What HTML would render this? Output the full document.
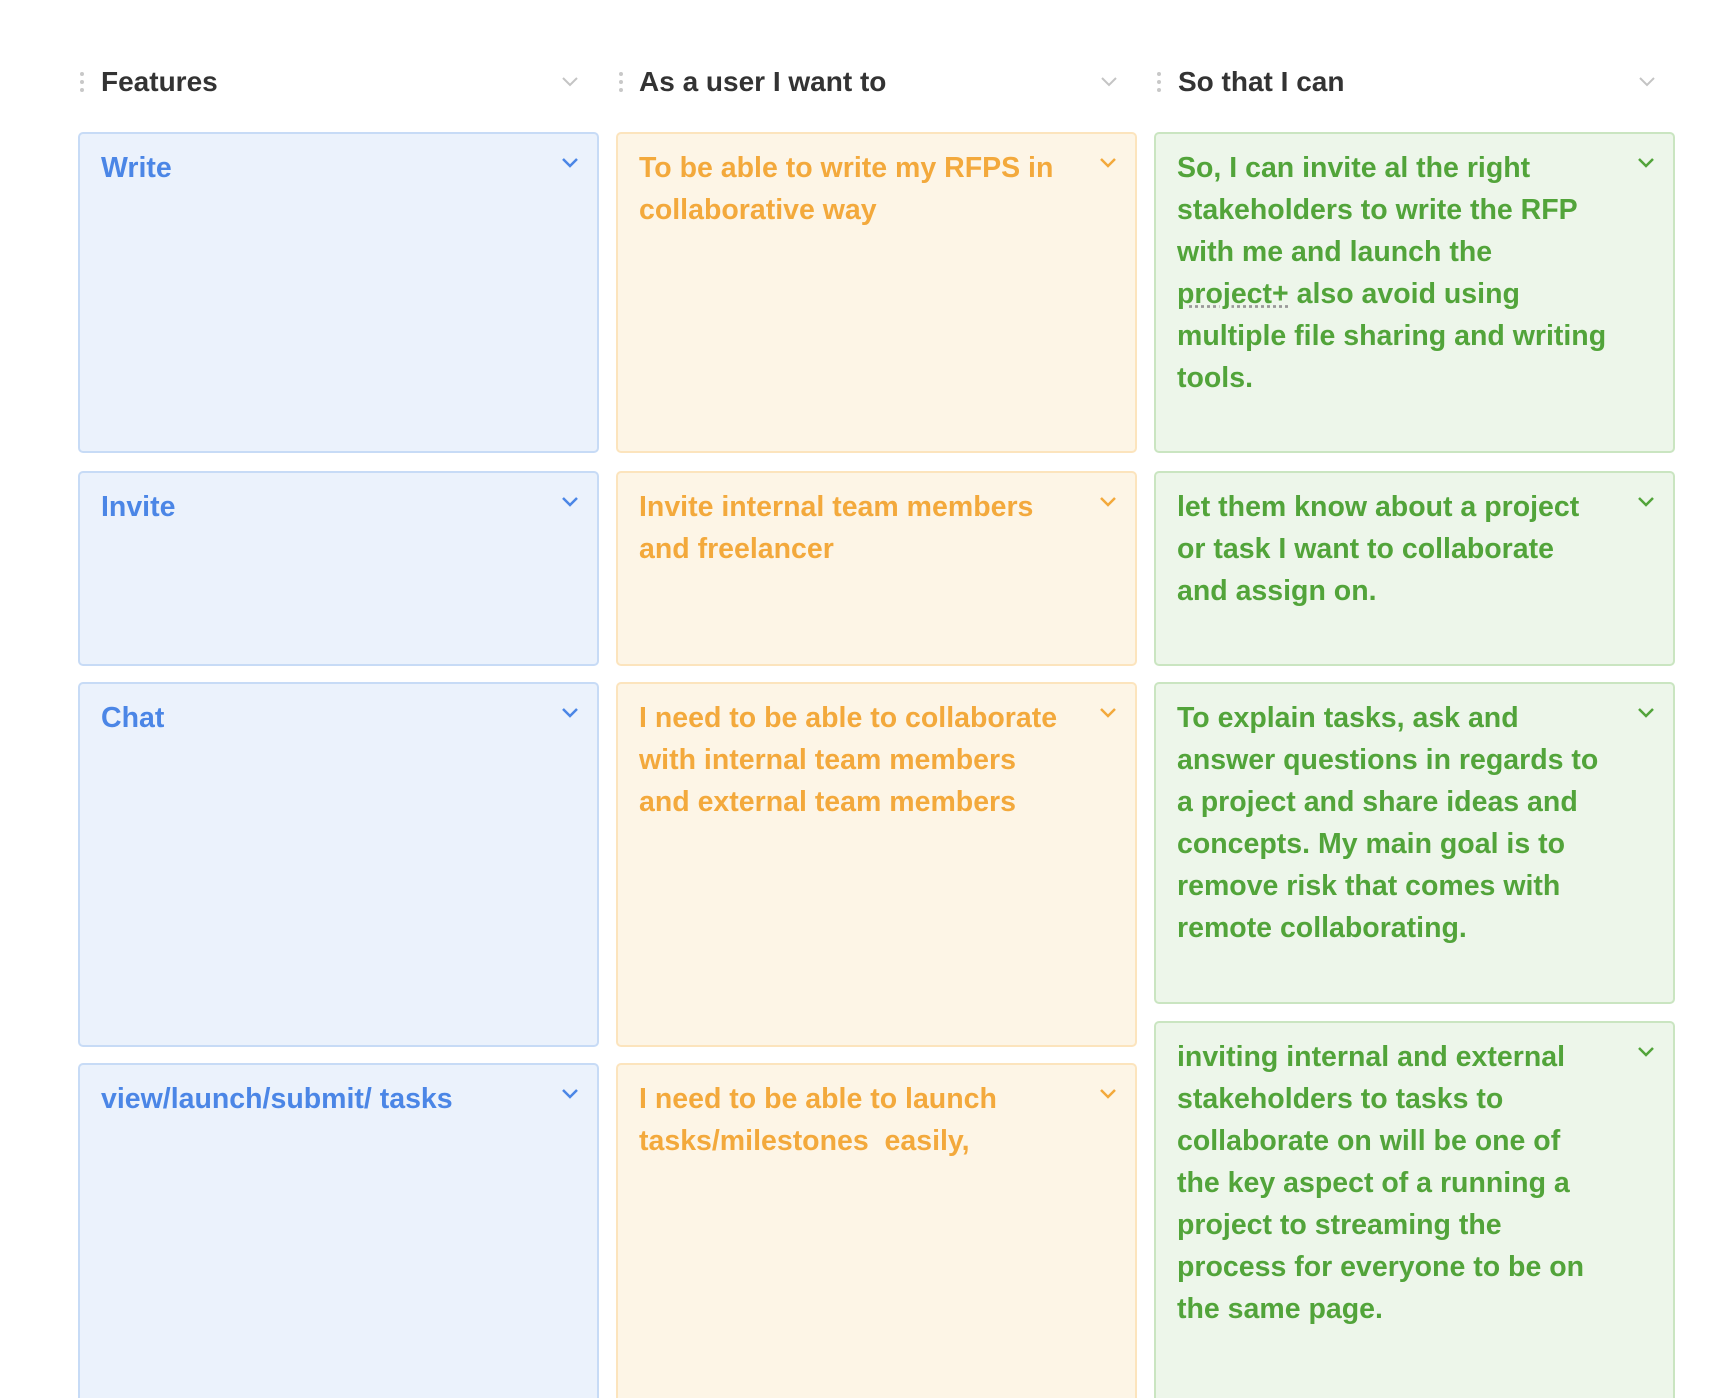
<!DOCTYPE html>
<html><head><style>
html,body{margin:0;padding:0;height:1398px;overflow:hidden}
#w{position:relative;width:1730px;height:1398px;overflow:hidden;background:#fff;font-family:"Liberation Sans",sans-serif}
.h{position:absolute;top:66px;font-size:28px;font-weight:bold;color:#333;white-space:nowrap}
.dot{position:absolute;top:72px;width:4px;height:20px}
.dot i{display:block;width:4px;height:4px;border-radius:2px;background:#c8c8c8;margin-bottom:4px}
.c{position:absolute;box-sizing:border-box;border:2px solid;border-radius:5px;padding:13px 60px 0 21px;font-size:28.5px;font-weight:bold;line-height:42px;white-space:nowrap}
.b{background:#ebf2fc;border-color:#c7dbf6;color:#4b86e6}
.o{background:#fdf5e6;border-color:#fce4bd;color:#f3a93c}
.g{background:#edf6ea;border-color:#cae5c1;color:#52a43a}
.c svg{position:absolute;right:18px;top:23px}
.hc{position:absolute;top:76px}
</style></head><body><div id="w">
<div class="dot" style="left:80px"><i></i><i></i><i></i></div>
<div class="h" style="left:101px">Features</div>
<svg class="hc" style="left:561px" width="18" height="12"><path d="M2 2l7 7 7-7" fill="none" stroke="#c4c4c4" stroke-width="2"/></svg>
<div class="dot" style="left:619px"><i></i><i></i><i></i></div>
<div class="h" style="left:639px">As a user I want to</div>
<svg class="hc" style="left:1100px" width="18" height="12"><path d="M2 2l7 7 7-7" fill="none" stroke="#c4c4c4" stroke-width="2"/></svg>
<div class="dot" style="left:1157px"><i></i><i></i><i></i></div>
<div class="h" style="left:1178px">So that I can</div>
<svg class="hc" style="left:1638px" width="18" height="12"><path d="M2 2l7 7 7-7" fill="none" stroke="#c4c4c4" stroke-width="2"/></svg>

<div class="c b" style="left:78px;top:132px;width:521px;height:321px">Write<svg width="18" height="12"><path d="M2 2l7 7 7-7" fill="none" stroke="#4b86e6" stroke-width="2.5"/></svg></div>
<div class="c o" style="left:616px;top:132px;width:521px;height:321px">To be able to write my RFPS in<br>collaborative way<svg width="18" height="12"><path d="M2 2l7 7 7-7" fill="none" stroke="#f3a93c" stroke-width="2.5"/></svg></div>
<div class="c g" style="left:1154px;top:132px;width:521px;height:321px">So, I can invite al the right<br>stakeholders to write the RFP<br>with me and launch the<br><span style="text-decoration:underline dotted #999">project+</span> also avoid using<br>multiple file sharing and writing<br>tools.<svg width="18" height="12"><path d="M2 2l7 7 7-7" fill="none" stroke="#52a43a" stroke-width="2.5"/></svg></div>

<div class="c b" style="left:78px;top:471px;width:521px;height:195px">Invite<svg width="18" height="12"><path d="M2 2l7 7 7-7" fill="none" stroke="#4b86e6" stroke-width="2.5"/></svg></div>
<div class="c o" style="left:616px;top:471px;width:521px;height:195px">Invite internal team members<br>and freelancer<svg width="18" height="12"><path d="M2 2l7 7 7-7" fill="none" stroke="#f3a93c" stroke-width="2.5"/></svg></div>
<div class="c g" style="left:1154px;top:471px;width:521px;height:195px">let them know about a project<br>or task I want to collaborate<br>and assign on.<svg width="18" height="12"><path d="M2 2l7 7 7-7" fill="none" stroke="#52a43a" stroke-width="2.5"/></svg></div>

<div class="c b" style="left:78px;top:682px;width:521px;height:365px">Chat<svg width="18" height="12"><path d="M2 2l7 7 7-7" fill="none" stroke="#4b86e6" stroke-width="2.5"/></svg></div>
<div class="c o" style="left:616px;top:682px;width:521px;height:365px">I need to be able to collaborate<br>with internal team members<br>and external team members<svg width="18" height="12"><path d="M2 2l7 7 7-7" fill="none" stroke="#f3a93c" stroke-width="2.5"/></svg></div>
<div class="c g" style="left:1154px;top:682px;width:521px;height:322px">To explain tasks, ask and<br>answer questions in regards to<br>a project and share ideas and<br>concepts. My main goal is to<br>remove risk that comes with<br>remote collaborating.<svg width="18" height="12"><path d="M2 2l7 7 7-7" fill="none" stroke="#52a43a" stroke-width="2.5"/></svg></div>

<div class="c b" style="left:78px;top:1063px;width:521px;height:400px">view/launch/submit/ tasks<svg width="18" height="12"><path d="M2 2l7 7 7-7" fill="none" stroke="#4b86e6" stroke-width="2.5"/></svg></div>
<div class="c o" style="left:616px;top:1063px;width:521px;height:400px">I need to be able to launch<br>tasks/milestones&nbsp; easily,<svg width="18" height="12"><path d="M2 2l7 7 7-7" fill="none" stroke="#f3a93c" stroke-width="2.5"/></svg></div>
<div class="c g" style="left:1154px;top:1021px;width:521px;height:440px">inviting internal and external<br>stakeholders to tasks to<br>collaborate on will be one of<br>the key aspect of a running a<br>project to streaming the<br>process for everyone to be on<br>the same page.<svg width="18" height="12"><path d="M2 2l7 7 7-7" fill="none" stroke="#52a43a" stroke-width="2.5"/></svg></div>
</div></body></html>
